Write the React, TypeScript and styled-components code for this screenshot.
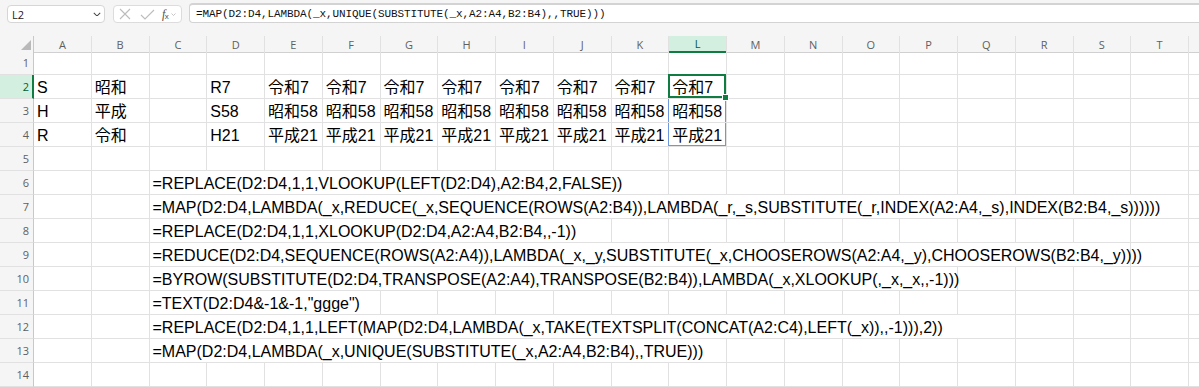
import React from 'react';
import styled, { createGlobalStyle, css } from 'styled-components';

const COLS = ['A', 'B', 'C', 'D', 'E', 'F', 'G', 'H', 'I', 'J', 'K', 'L', 'M', 'N', 'O', 'P', 'Q', 'R', 'S', 'T', ''];
const HEAD_W = 34;
const COL_W = 57.75;
const ACTIVE_COL = 11; // L
const GREEN = '#107c41';
const SPILL = '#6d97de';

type CellData = { text: string; span?: number };

const ERAS: Record<number, CellData[]> = {
	2: [{ text: 'S' }, { text: '昭和' }, { text: '' }, { text: 'R7' }],
	3: [{ text: 'H' }, { text: '平成' }, { text: '' }, { text: 'S58' }],
	4: [{ text: 'R' }, { text: '令和' }, { text: '' }, { text: 'H21' }],
};
const SPILLED: Record<number, string> = { 2: '令和7', 3: '昭和58', 4: '平成21' };

const FORMULAS: [string, number][] = [
	['=REPLACE(D2:D4,1,1,VLOOKUP(LEFT(D2:D4),A2:B4,2,FALSE))', 9],
	['=MAP(D2:D4,LAMBDA(_x,REDUCE(_x,SEQUENCE(ROWS(A2:B4)),LAMBDA(_r,_s,SUBSTITUTE(_r,INDEX(A2:A4,_s),INDEX(B2:B4,_s))))))', 18],
	['=REPLACE(D2:D4,1,1,XLOOKUP(D2:D4,A2:A4,B2:B4,,-1))', 8],
	['=REDUCE(D2:D4,SEQUENCE(ROWS(A2:A4)),LAMBDA(_x,_y,SUBSTITUTE(_x,CHOOSEROWS(A2:A4,_y),CHOOSEROWS(B2:B4,_y))))', 17],
	['=BYROW(SUBSTITUTE(D2:D4,TRANSPOSE(A2:A4),TRANSPOSE(B2:B4)),LAMBDA(_x,XLOOKUP(,_x,_x,,-1)))', 14],
	['=TEXT(D2:D4&-1&-1,"ggge")', 4],
	['=REPLACE(D2:D4,1,1,LEFT(MAP(D2:D4,LAMBDA(_x,TAKE(TEXTSPLIT(CONCAT(A2:C4),LEFT(_x)),,-1))),2))', 15],
	['=MAP(D2:D4,LAMBDA(_x,UNIQUE(SUBSTITUTE(_x,A2:A4,B2:B4),,TRUE)))', 10],
];

const rowCells = (row: number): CellData[] => {
	if (ERAS[row]) {
		const base = [...ERAS[row]];
		for (let i = 4; i <= ACTIVE_COL; i++) base.push({ text: SPILLED[row] });
		return base;
	}
	if (row >= 6 && row <= 13) {
		const [text, span] = FORMULAS[row - 6];
		return [{ text: '' }, { text: '' }, { text, span }];
	}
	return [];
};

const GlobalStyle = createGlobalStyle`
	html, body {
		margin: 0;
		padding: 0;
		background: #fff;
		overflow: hidden;
	}
	body {
		font-family: 'Liberation Sans', 'Noto Sans CJK JP', sans-serif;
	}
`;

const Window = styled.div`
	width: 1199px;
	height: 387px;
	overflow: hidden;
	background: #fff;
`;

/* formula bar */
const FormulaBar = styled.div`
	height: 36px;
	box-sizing: border-box;
	padding: 3px 0 0 7px;
	background: #f5f5f5;
	display: flex;
	align-items: flex-start;
	font-family: 'Open Sans', 'Liberation Sans', sans-serif;
`;

const NameBox = styled.div`
	margin-top: 2px;
	width: 98px;
	height: 18px;
	box-sizing: border-box;
	background: #fff;
	border: 1px solid #d6d6d6;
	border-radius: 4px;
	display: flex;
	align-items: center;
	justify-content: space-between;
	padding: 0 3px 0 4px;
	font-size: 11px;
	color: #1a1a1a;
`;

const FuncBox = styled.div`
	margin: 2px 0 0 8px;
	width: 69px;
	height: 18px;
	box-sizing: border-box;
	background: #fff;
	border: 1px solid #dcdcdc;
	border-radius: 4px;
	display: flex;
	align-items: center;
	padding-left: 5px;
`;

const Fx = styled.span`
	margin-left: 7px;
	font-family: 'Liberation Serif', serif;
	font-style: italic;
	font-size: 12px;
	color: #505050;
	letter-spacing: -0.5px;

	sub {
		font-size: 8px;
		vertical-align: -1px;
		font-style: normal;
		font-family: 'Liberation Sans', sans-serif;
	}
`;

const FormulaInput = styled.div`
	margin-left: 7px;
	flex: 1;
	height: 20px;
	box-sizing: border-box;
	background: #fff;
	border: 1px solid #d3d3d3;
	border-top-width: 2px;
	border-right: none;
	border-radius: 4px 0 0 4px;
	display: flex;
	align-items: center;
	padding-left: 6px;
	font-family: 'Liberation Mono', monospace;
	font-size: 11px;
	letter-spacing: -0.1px;
	color: #111;
	white-space: nowrap;
`;

/* sheet */
const Grid = styled.div<{ $header?: boolean }>`
	display: grid;
	grid-template-columns: ${HEAD_W}px repeat(${COLS.length}, ${COL_W}px);
	height: ${({ $header }) => ($header ? 15 : 24)}px;
`;

const Corner = styled.div`
	box-sizing: border-box;
	background: #f5f5f5;
	border-right: 1px solid #c8c8c8;
	border-bottom: 1px solid #d0d0d0;
	display: flex;
	align-items: flex-end;
	justify-content: flex-end;
	padding: 0 2px 2px 0;
`;

const headText = css`
	box-sizing: border-box;
	font-family: 'Open Sans', 'Liberation Sans', sans-serif;
	font-size: 11px;
	color: #5f5f5f;
	display: flex;
	align-items: center;
`;

const ColHead = styled.div<{ $selected?: boolean }>`
	${headText};
	justify-content: center;
	background: ${({ $selected }) => ($selected ? '#d3efdf' : '#f5f5f5')};
	border-right: 1px solid #e1e1e1;
	border-bottom: ${({ $selected }) => ($selected ? `2px solid ${GREEN}` : '1px solid #d0d0d0')};
	color: ${({ $selected }) => ($selected ? '#0c5a2f' : '#5f5f5f')};
`;

const RowHead = styled.div<{ $selected?: boolean }>`
	${headText};
	justify-content: flex-end;
	padding-right: ${({ $selected }) => ($selected ? 3 : 4)}px;
	background: ${({ $selected }) => ($selected ? '#d3efdf' : '#f5f5f5')};
	border-right: ${({ $selected }) => ($selected ? `2px solid ${GREEN}` : '1px solid #c8c8c8')};
	border-bottom: 1px solid #e1e1e1;
	color: ${({ $selected }) => ($selected ? '#0c5a2f' : '#5f5f5f')};
`;

const Cell = styled.div<{ $span?: number; $active?: boolean; $spill?: 'mid' | 'end' }>`
	position: relative;
	box-sizing: border-box;
	grid-column: span ${({ $span }) => $span ?? 1};
	border-right: 1px solid #e1e1e1;
	border-bottom: 1px solid #e1e1e1;
	padding: 0 3px;
	display: flex;
	align-items: flex-end;
	font-size: 16px;
	line-height: 20px;
	color: #000;
	white-space: nowrap;
	z-index: ${({ $active }) => ($active ? 2 : 'auto')};

	${({ $active }) =>
		$active &&
		css`
			&::after {
				content: '';
				position: absolute;
				top: -1px;
				left: -1px;
				right: 0;
				bottom: 0;
				border: 2px solid ${GREEN};
			}
		`}

	${({ $spill }) =>
		$spill &&
		css`
			&::after {
				content: '';
				position: absolute;
				top: 0;
				left: -1px;
				right: 0;
				bottom: 0;
				border-left: 1px solid ${SPILL};
				border-right: 1px solid ${SPILL};
				border-bottom: ${$spill === 'end' ? `1px solid ${SPILL}` : 'none'};
			}
		`}
`;

const FillHandle = styled.span`
	position: absolute;
	right: -3px;
	bottom: -3px;
	width: 5px;
	height: 5px;
	background: ${GREEN};
	border: 1px solid #fff;
	z-index: 3;
`;

const Chevron = ({ size = 8, color = '#555' }: { size?: number; color?: string }) => (
	<svg width={size} height={size * 0.6} viewBox="0 0 10 6" fill="none">
		<polyline points="1,1 5,5 9,1" stroke={color} strokeWidth="1.3" />
	</svg>
);

const SheetRow = ({ row }: { row: number }) => {
	const cells = rowCells(row);
	const out: React.ReactNode[] = [];
	let col = 0;
	while (col < COLS.length) {
		const data = cells[col];
		const span = data?.span ?? 1;
		const isActive = row === 2 && col === ACTIVE_COL;
		const spill = col === ACTIVE_COL && row === 3 ? 'mid' : col === ACTIVE_COL && row === 4 ? 'end' : undefined;
		out.push(
			<Cell key={col} $span={data?.span} $active={isActive} $spill={spill}>
				{data?.text}
				{isActive && <FillHandle />}
			</Cell>
		);
		col += span;
	}
	return (
		<Grid>
			<RowHead $selected={row === 2}>{row}</RowHead>
			{out}
		</Grid>
	);
};

const App = () => {
	const rows = Array.from({ length: 14 }, (_, i) => i + 1);

	return (
		<>
			<GlobalStyle />
			<Window>
				<FormulaBar>
					<NameBox>
						<span>L2</span>
						<Chevron size={8} color="#444" />
					</NameBox>
					<FuncBox>
						<svg width="12" height="12" viewBox="0 0 12 12">
							<path d="M1 1 L11 11 M11 1 L1 11" stroke="#bcbcbc" strokeWidth="1.1" />
						</svg>
						<svg width="15" height="11" viewBox="0 0 15 11" style={{ marginLeft: 9 }}>
							<polyline points="1,6 5,10 14,1" fill="none" stroke="#bcbcbc" strokeWidth="1.1" />
						</svg>
						<Fx>
							f<sub>x</sub>
						</Fx>
						<span style={{ marginLeft: 3, display: 'flex' }}>
							<Chevron size={5} color="#a8a8a8" />
						</span>
					</FuncBox>
					<FormulaInput>=MAP(D2:D4,LAMBDA(_x,UNIQUE(SUBSTITUTE(_x,A2:A4,B2:B4),,TRUE)))</FormulaInput>
				</FormulaBar>

				<Grid $header>
					<Corner>
						<svg width="10" height="10" viewBox="0 0 10 10">
							<polygon points="10,0 10,10 0,10" fill="#b9b9b9" />
						</svg>
					</Corner>
					{COLS.map((c, i) => (
						<ColHead key={i} $selected={i === ACTIVE_COL}>
							{c}
						</ColHead>
					))}
				</Grid>

				{rows.map((r) => (
					<SheetRow key={r} row={r} />
				))}
			</Window>
		</>
	);
};

export default App;
